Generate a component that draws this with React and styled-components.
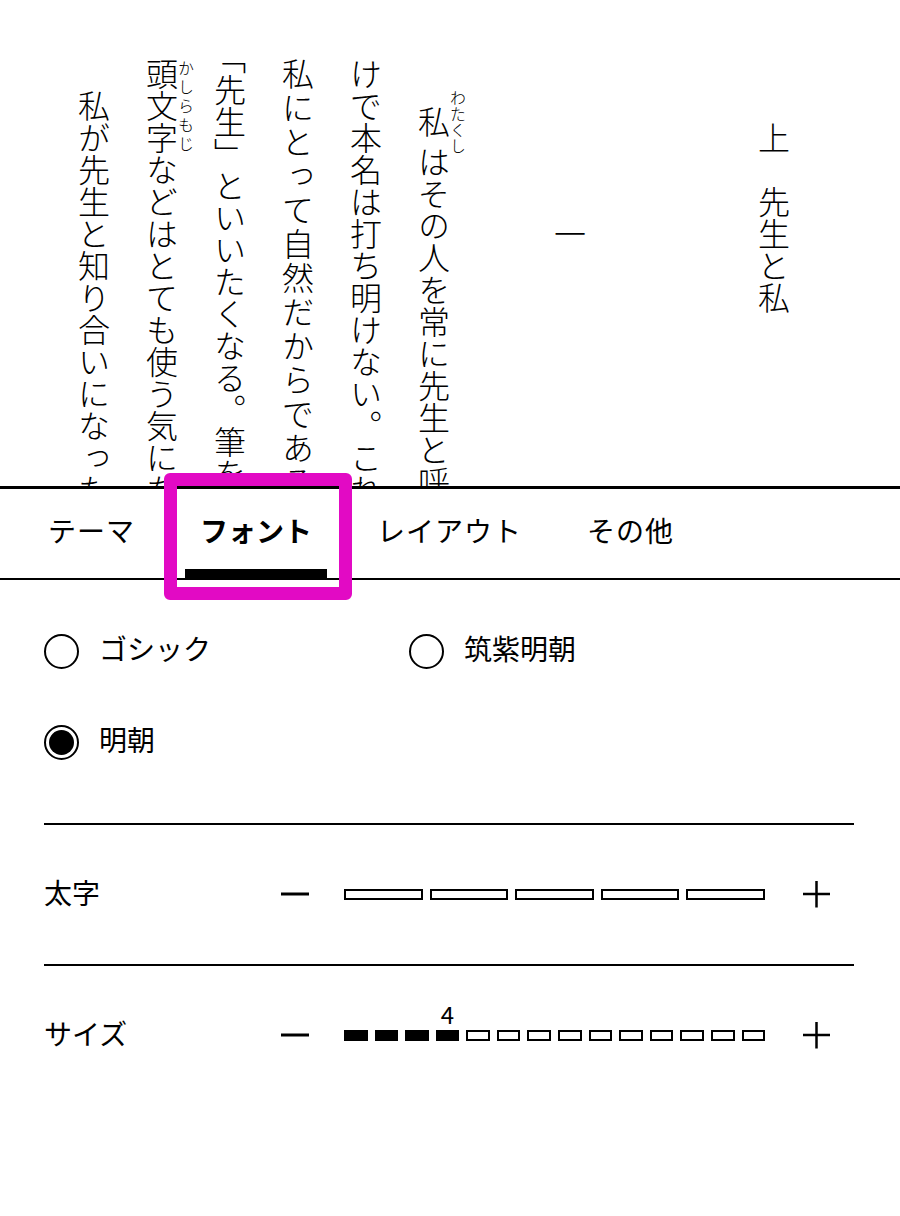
import React from "react";
import styled, { createGlobalStyle } from "styled-components";

const GlobalStyle = createGlobalStyle`
  html, body {
    margin: 0;
    padding: 0;
    background: #fff;
  }
  body {
    font-family: "Noto Sans CJK JP", "Noto Sans", sans-serif;
    color: #000;
  }
`;

const tabs = ["テーマ", "フォント", "レイアウト", "その他"];

const fonts = [
  { name: "ゴシック", checked: false },
  { name: "筑紫明朝", checked: false },
  { name: "明朝", checked: true },
];

const sliders = [
  { label: "太字", steps: 5, value: 0 },
  { label: "サイズ", steps: 14, value: 4 },
];

const App = () => {
  return (
    <Screen>
      <GlobalStyle />
      <Reader>
        <Article>
          <ChapterTitle>上　先生と私</ChapterTitle>
          <SectionNumber>一</SectionNumber>
          <Paragraph>
            <ruby>
              私<rt>わたくし</rt>
            </ruby>
            はその人を常に先生と呼んでいた。だからここでもただ先生と書くだ
            <br />
            けで本名は打ち明けない。これは世間を
            <ruby>
              憚<rt>はばか</rt>
            </ruby>
            る遠慮というよりも、その方が
            <br />
            {/* this column is justified a little looser in the original */}
            <Loose>
              私にとって自然だからである。私はその人の記憶を呼び起すごとに、すぐ
            </Loose>
            <br />
            「先生」といいたくなる。筆を
            <ruby>
              執<rt>と</rt>
            </ruby>
            っても心持は同じ事である。よそよそしい
            <br />
            <ruby>
              頭文字<rt>かしらもじ</rt>
            </ruby>
            などはとても使う気にならない。
          </Paragraph>
          <Paragraph>
            私が先生と知り合いになったのは
            <ruby>
              鎌倉<rt>かまくら</rt>
            </ruby>
            である。その時私はまだ若々しい書生であった。暑中休暇を利用して海水浴に行った友達からぜひ来いという端書を受け取ったので、私は多少の金を工面して、出掛ける事にした。
          </Paragraph>
        </Article>
      </Reader>

      <Panel>
        <TabBar>
          {tabs.map((t) => (
            <Tab key={t} $active={t === "フォント"}>
              {t}
              {t === "フォント" && <Highlight />}
            </Tab>
          ))}
        </TabBar>

        <FontOptions>
          {fonts.map((f) => (
            <Option key={f.name}>
              <RadioMark $checked={f.checked} />
              <OptionText>{f.name}</OptionText>
            </Option>
          ))}
        </FontOptions>

        {sliders.map((s) => (
          <React.Fragment key={s.label}>
            <Divider />
            <SettingRow>
              <RowLabel>{s.label}</RowLabel>
              <StepButton aria-label="減らす">
                <svg width="28" height="28" viewBox="0 0 28 28">
                  <path d="M0 13h28" stroke="#000" strokeWidth="3" />
                </svg>
              </StepButton>
              <Track>
                {Array.from({ length: s.steps }, (_, i) => (
                  <Segment key={i} $on={i < s.value}>
                    {s.value > 0 && i === s.value - 1 && (
                      <ValueLabel>{s.value}</ValueLabel>
                    )}
                  </Segment>
                ))}
              </Track>
              <StepButton aria-label="増やす">
                <svg width="27" height="27" viewBox="0 0 27 27">
                  <path
                    d="M0 13h27M13.5 -0.5v27"
                    stroke="#000"
                    strokeWidth="2.5"
                  />
                </svg>
              </StepButton>
            </SettingRow>
          </React.Fragment>
        ))}
      </Panel>
    </Screen>
  );
};

const Screen = styled.div`
  width: 900px;
  height: 1216px;
  overflow: hidden;
  display: flex;
  flex-direction: column;
  background: #fff;
`;

const Reader = styled.div`
  flex: none;
  height: 486px;
  overflow: hidden;
  display: flex;
  justify-content: flex-end;
  padding-right: 92px;
`;

const Article = styled.article`
  flex: none;
  writing-mode: vertical-rl;
  box-sizing: border-box;
  width: 748px;
  height: 1216px;
  padding-top: 58px;
  overflow: hidden;
  font-size: 32px;
  font-weight: 300;
  line-height: 68px;
  text-spacing-trim: trim-start;

  rt {
    font-size: 16px;
    line-height: 1;
  }
`;

const Loose = styled.span`
  letter-spacing: 2px;
`;

const ChapterTitle = styled.h2`
  margin: 0;
  margin-block-end: 136px;
  font-size: inherit;
  font-weight: inherit;
  text-indent: 2em;
`;

const SectionNumber = styled.h3`
  margin: 0;
  margin-block-end: 68px;
  font-size: inherit;
  font-weight: inherit;
  text-indent: 5em;
`;

const Paragraph = styled.p`
  margin: 0;
  text-indent: 1em;
`;

const Panel = styled.section`
  flex: 1;
  border-top: 3px solid #000;
  display: flex;
  flex-direction: column;
  background: #fff;
`;

const TabBar = styled.nav`
  display: flex;
  gap: 35px;
  height: 89px;
  padding-left: 33px;
  border-bottom: 2px solid #000;
`;

const Tab = styled.button`
  position: relative;
  display: flex;
  align-items: center;
  padding: 0 15px 8px;
  border: 0;
  background: none;
  font-family: inherit;
  font-size: 28px;
  line-height: 1;
  letter-spacing: ${(p) => (p.$active ? "0" : "1px")};
  font-weight: ${(p) => (p.$active ? 700 : 400)};
  color: #000;

  &::after {
    content: "";
    display: ${(p) => (p.$active ? "block" : "none")};
    position: absolute;
    left: 0;
    right: 0;
    bottom: 0;
    height: 9px;
    background: #000;
  }
`;

const Highlight = styled.span`
  position: absolute;
  top: -16px;
  left: -21px;
  right: -25px;
  bottom: -22px;
  z-index: 2;
  box-sizing: border-box;
  border: 13px solid #e20ac4;
  border-radius: 6px;
  pointer-events: none;
`;

const FontOptions = styled.div`
  display: grid;
  grid-template-columns: 365px 1fr;
  grid-auto-rows: 91px;
  align-items: center;
  padding: 26px 44px 35px;
`;

const Option = styled.label`
  display: flex;
  align-items: center;
  gap: 20px;
  font-size: 28px;
  line-height: 1;
`;

const OptionText = styled.span`
  padding-bottom: 7px;
`;

const RadioMark = styled.span`
  flex: none;
  box-sizing: border-box;
  width: 35px;
  height: 35px;
  border: 2px solid #000;
  border-radius: 50%;
  display: grid;
  place-items: center;

  &::after {
    content: "";
    display: ${(p) => (p.$checked ? "block" : "none")};
    width: 25px;
    height: 25px;
    border-radius: 50%;
    background: #000;
  }
`;

const Divider = styled.hr`
  margin: 0 46px 0 44px;
  border: 0;
  height: 2px;
  background: #000;
`;

const SettingRow = styled.div`
  display: flex;
  align-items: center;
  height: 139px;
  padding: 0 44px;
  font-size: 28px;
  line-height: 1;
`;

const RowLabel = styled.span`
  width: 237px;
  padding-bottom: 6px;
`;

const StepButton = styled.button`
  display: flex;
  align-items: center;
  justify-content: center;
  padding: 0;
  border: 0;
  background: none;
`;

const Track = styled.div`
  display: flex;
  gap: 7px;
  width: 421px;
  margin: 0 38px 0 35px;
`;

const Segment = styled.span`
  position: relative;
  flex: 1;
  box-sizing: border-box;
  height: 11px;
  border: 2px solid #000;
  background: ${(p) => (p.$on ? "#000" : "#fff")};
`;

const ValueLabel = styled.span`
  position: absolute;
  bottom: calc(100% + 6px);
  left: 50%;
  transform: translateX(-50%);
  font-size: 24px;
  line-height: 1;
`;

export default App;
